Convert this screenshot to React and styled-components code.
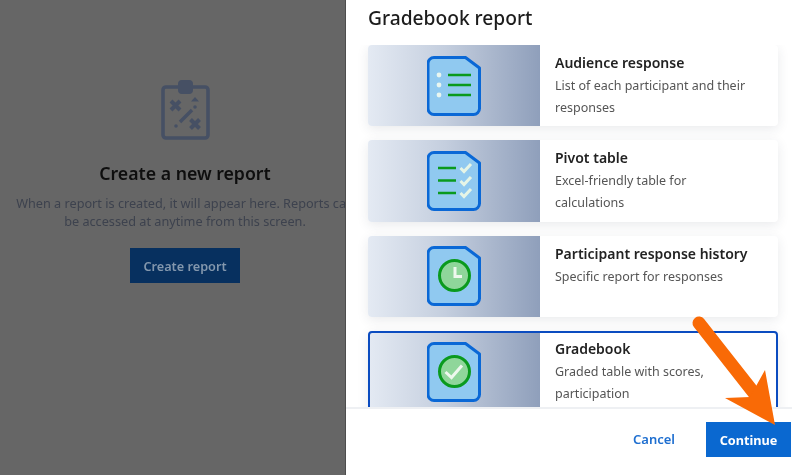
import React from "react"
import styled, { createGlobalStyle } from 'styled-components'

const GlobalStyle = createGlobalStyle`
html, body {
    margin: 0;
    padding: 0;
    background: #fff;
}
* {
    box-sizing: border-box;
}
`

const Page = styled.div`
position: relative;
display: flex;
width: 800px;
height: 475px;
overflow: hidden;
font-family: "Noto Sans", "Open Sans", sans-serif;
filter: blur(0.45px);
`

const Backdrop = styled.div`
flex: 0 0 346px;
overflow: hidden;
background-color: #666;
border-right: 1px solid #4d4d4d;
`

const EmptyState = styled.div`
display: flex;
flex-direction: column;
align-items: center;
width: 370px;
padding-top: 80px;
`

const EmptyTitle = styled.h2`
margin: 21px 0 0;
font-size: 17.7px;
line-height: 24px;
font-weight: 600;
color: #0e0e0e;
`

const EmptyText = styled.p`
margin: 9px 0 0;
font-size: 12.7px;
line-height: 18px;
text-align: center;
white-space: nowrap;
color: #3d424e;
`

const CreateButton = styled.div`
display: flex;
align-items: center;
justify-content: center;
width: 110px;
height: 35px;
margin-top: 18px;
font-size: 12.7px;
font-weight: 600;
color: #8397ad;
background-color: #07305f;
`

const Panel = styled.div`
flex: 1;
display: flex;
flex-direction: column;
min-width: 0;
background-color: #fff;
`

const PanelTitle = styled.h1`
flex: 0 0 45px;
margin: 0;
padding: 4px 0 0 22px;
font-size: 19.2px;
line-height: 27px;
font-weight: 500;
color: #1c1c1c;
`

const CardList = styled.div`
flex: 0 0 362px;
display: flex;
flex-direction: column;
gap: 14px;
padding: 0 22px;
overflow: hidden;
`

const Card = styled.div`
flex: 0 0 81.33px;
display: flex;
background-color: #fff;
border-radius: 4px;
overflow: hidden;
box-shadow: 0 3px 12px rgba(40, 50, 70, 0.1);
outline: ${props => props.$selected ? '2px solid #0b4cc0' : 'none'};
outline-offset: -2px;
`

const Thumb = styled.div`
flex: 0 0 172px;
display: flex;
align-items: center;
justify-content: center;
background: linear-gradient(90deg, #e4eaf3 0%, #c4cede 45%, #8f9fbb 100%);
`

const CardBody = styled.div`
flex: 1;
padding: 8px 10px 0 15px;
`

const CardTitle = styled.div`
font-size: 14px;
line-height: 20px;
font-weight: 600;
color: #222;
`

const CardText = styled.div`
margin-top: 2px;
font-size: 12.5px;
line-height: 22px;
color: #555;
`

const Footer = styled.div`
flex: 1;
display: flex;
align-items: flex-start;
justify-content: flex-end;
gap: 31px;
padding: 13px 9px 0 0;
margin-right: 8px;
border-top: 2px solid #eef0f3;
`

const CancelLink = styled.div`
font-size: 13px;
line-height: 35px;
font-weight: 600;
color: #1f6fd0;
`

const ContinueButton = styled.div`
display: flex;
align-items: center;
justify-content: center;
width: 85px;
height: 35px;
margin-right: -8px;
font-size: 12.7px;
font-weight: 700;
color: #fff;
background-color: #0a68d0;
`

const Arrow = styled.svg`
position: absolute;
left: 0;
top: 0;
pointer-events: none;
`

const DocIcon = ({ children }) => (
    <svg width="54" height="60" viewBox="0 0 54 60">
        <path d="M7 1.5H38.5L52.5 12V52.5a6 6 0 0 1-6 6H7a6 6 0 0 1-6-6V7.5a6 6 0 0 1 6-6Z" fill="#90c9f0" stroke="#0a68d6" strokeWidth="3" strokeLinejoin="round" />
        {children}
    </svg>
)

const ListIcon = () => (
    <DocIcon>
        <circle cx="12" cy="19" r="2.4" fill="#e8f6f0" />
        <circle cx="12" cy="29" r="2.4" fill="#e8f6f0" />
        <circle cx="12" cy="39" r="2.4" fill="#e8f6f0" />
        <path d="M21 19H44M21 29H44M21 39H44" stroke="#0a9a1e" strokeWidth="2.6" fill="none" />
    </DocIcon>
)

const PivotIcon = () => (
    <DocIcon>
        <path d="M11 17H29M11 29.5H29M11 42H29" stroke="#0a9a1e" strokeWidth="2.6" fill="none" />
        <path d="M33.5 17l3.5 3.5L44 13M33.5 30l3.5 3.5L44 26M33.5 42l3.5 3.5L44 38" stroke="#e6f5e6" strokeWidth="3" fill="none" />
    </DocIcon>
)

const ClockIcon = () => (
    <DocIcon>
        <circle cx="27.5" cy="29.5" r="15" fill="#8fd69a" stroke="#0a9a1e" strokeWidth="3" />
        <path d="M28 21V30.5H35" stroke="#eef8ee" strokeWidth="3" fill="none" />
    </DocIcon>
)

const CheckIcon = () => (
    <DocIcon>
        <circle cx="27.5" cy="29.5" r="15" fill="#8fd69a" stroke="#0a9a1e" strokeWidth="3" />
        <path d="M18.5 30l6 5.5L35 23.5" stroke="#eef8ee" strokeWidth="3" fill="none" />
    </DocIcon>
)

const ClipboardIcon = () => (
    <svg width="49" height="60" viewBox="0 0 49 60">
        <rect x="2" y="7" width="45" height="51" rx="3" fill="none" stroke="#465064" strokeWidth="3.6" />
        <rect x="17" y="0" width="15" height="14" rx="4" fill="#465064" />
        <path d="M10 21l9 9M19 21l-9 9M29.5 39.5l9 9M38.5 39.5l-9 9" stroke="#465064" strokeWidth="4" fill="none" />
        <path d="M30 21.5l4-4.5 4 4.5Z" fill="#465064" />
        <path d="M19 42L31 30" stroke="#465064" strokeWidth="3.4" fill="none" />
        <circle cx="34" cy="27" r="1.8" fill="#465064" />
        <circle cx="15" cy="46" r="1.8" fill="#465064" />
    </svg>
)

const reports = [
    { title: 'Audience response', text: <>List of each participant and their<br />responses</>, Icon: ListIcon },
    { title: 'Pivot table', text: <>Excel-friendly table for<br />calculations</>, Icon: PivotIcon },
    { title: 'Participant response history', text: 'Specific report for responses', Icon: ClockIcon },
    { title: 'Gradebook', text: <>Graded table with scores,<br />participation</>, Icon: CheckIcon, selected: true },
]

const App = () => (
    <Page>
        <GlobalStyle />
        <Backdrop>
            <EmptyState>
                <ClipboardIcon />
                <EmptyTitle>Create a new report</EmptyTitle>
                <EmptyText>
                    When a report is created, it will appear here. Reports can<br />
                    be accessed at anytime from this screen.
                </EmptyText>
                <CreateButton>Create report</CreateButton>
            </EmptyState>
        </Backdrop>
        <Panel>
            <PanelTitle>Gradebook report</PanelTitle>
            <CardList>
                {reports.map(({ title, text, Icon, selected }) => (
                    <Card key={title} $selected={selected}>
                        <Thumb><Icon /></Thumb>
                        <CardBody>
                            <CardTitle>{title}</CardTitle>
                            <CardText>{text}</CardText>
                        </CardBody>
                    </Card>
                ))}
            </CardList>
            <Footer>
                <CancelLink>Cancel</CancelLink>
                <ContinueButton>Continue</ContinueButton>
            </Footer>
        </Panel>
        <Arrow width="800" height="475" viewBox="0 0 800 475">
            <path d="M699 323L754 393" stroke="#f96a06" strokeWidth="13" strokeLinecap="round" fill="none" />
            <path d="M765 370L775 425L725 398L750 397Z" fill="#f96a06" />
        </Arrow>
    </Page>
)

export default App
